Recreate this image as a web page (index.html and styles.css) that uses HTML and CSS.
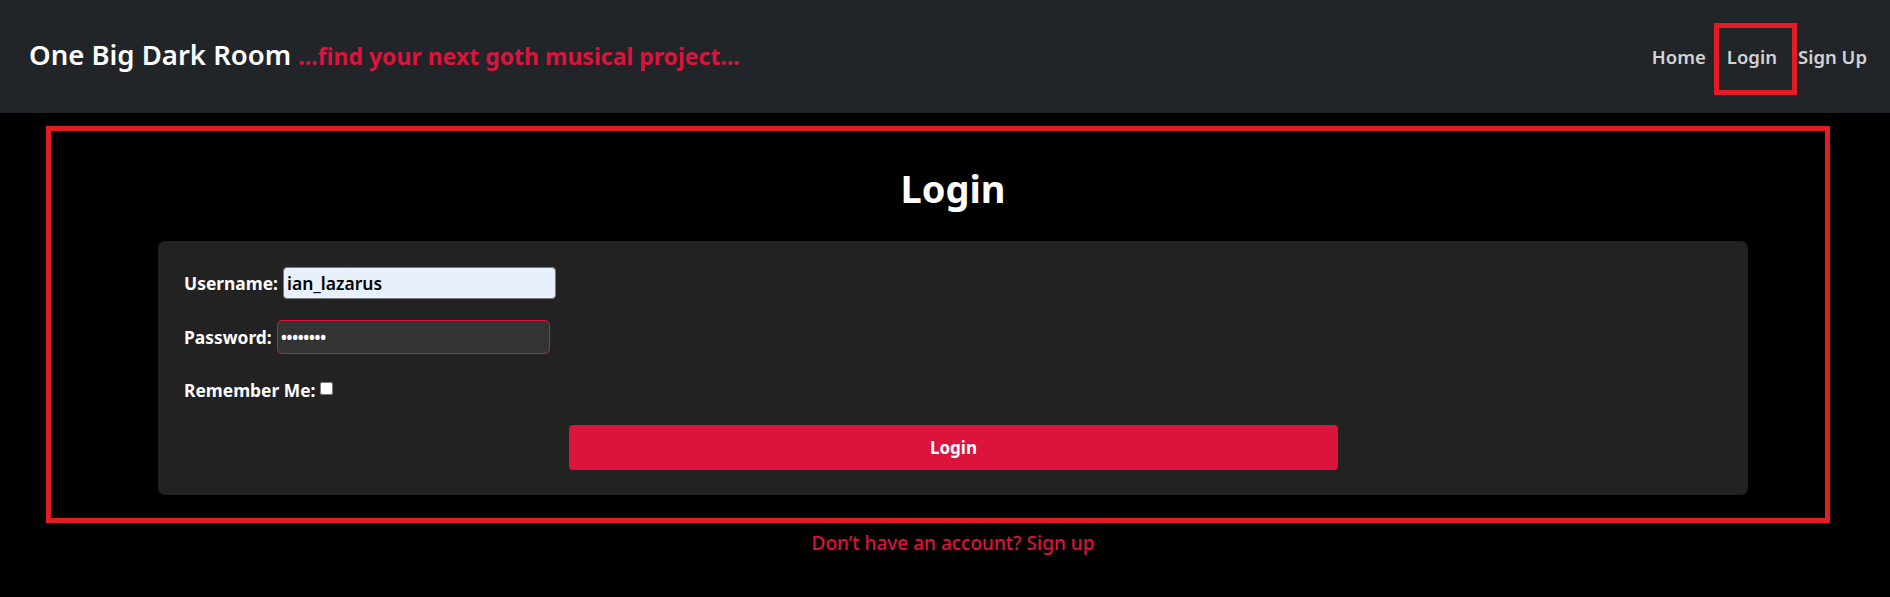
FILE: index.html
```html
<!DOCTYPE html>
<html lang="en">
<head>
<meta charset="utf-8">
<title>Login - One Big Dark Room</title>
<link rel="stylesheet" href="styles.css">
</head>
<body>
<header class="navbar">
  <a class="brand" href="#">One Big Dark Room <span class="tagline">...find your next goth musical project...</span></a>
  <nav>
    <ul class="nav-list">
      <li><a class="nav-link" href="#">Home</a></li>
      <li><a class="nav-link active" href="#">Login</a></li>
      <li><a class="nav-link" href="#">Sign Up</a></li>
    </ul>
  </nav>
</header>
<main class="main">
  <section class="frame">
    <div class="content">
      <h1 class="title">Login</h1>
      <form class="card">
        <div class="field field-user">
          <label class="label" for="username">Username:</label>
          <input class="input input-user" id="username" type="text" value="ian_lazarus">
        </div>
        <div class="field field-pass">
          <label class="label" for="password">Password:</label>
          <input class="input input-pass" id="password" type="password" value="password">
        </div>
        <div class="field field-remember">
          <label class="label" for="remember">Remember Me:</label>
          <input class="check" id="remember" type="checkbox">
        </div>
        <button class="btn" type="button">Login</button>
      </form>
    </div>
  </section>
  <p class="signup"><a href="#">Don’t have an account? Sign up</a></p>
</main>
</body>
</html>
```

FILE: styles.css
```css
* { box-sizing: border-box; }

body {
  margin: 0;
  background: #000;
  font-family: "Noto Sans", "Open Sans", sans-serif;
  color: #fff;
}

a { text-decoration: none; }

.navbar {
  height: 113px;
  background: #212529;
  display: flex;
  align-items: center;
  justify-content: space-between;
  padding: 0 23px 0 29px;
}

.brand {
  color: #fff;
  font-size: 27.5px;
  font-weight: 600;
  line-height: 30px;
  white-space: nowrap;
  margin-top: -2px;
}

.tagline {
  color: #dc143c;
  font-size: 23px;
  font-weight: 700;
}

.nav-list {
  list-style: none;
  margin: 0;
  padding: 0;
  display: flex;
  gap: 21px;
}

.nav-link {
  display: block;
  position: relative;
  color: #d2d3d4;
  font-size: 18.5px;
  font-weight: 600;
  line-height: 20px;
  margin-top: 0;
}

.nav-link.active::after {
  content: "";
  position: absolute;
  left: -13px;
  right: -20px;
  top: -24px;
  bottom: -28px;
  border: 5px solid #e31b23;
}

.main {
  padding-top: 13px;
}

.frame {
  margin: 0 60px 0 46px;
  border: 5px solid #e31b23;
  padding: 34px 77px 23px 107px;
}

.title {
  margin: 0 0 30px;
  text-align: center;
  font-size: 38px;
  font-weight: 700;
  line-height: 46px;
}

.card {
  background: #222;
  border-radius: 7px;
  padding: 26px 25px 25px 26px;
}

.field {
  display: flex;
  align-items: center;
}

.field-user { margin-bottom: 21px; }
.field-pass { margin-bottom: 26px; }
.field-remember { margin-bottom: 25px; height: 20px; }

.label {
  font-size: 17.4px;
  font-weight: 700;
  line-height: 20px;
  color: #fff;
  margin-right: 5px;
}

.input {
  width: 273px;
  font-family: "Noto Sans", "Open Sans", sans-serif;
  font-size: 17.5px;
  font-weight: 600;
  padding: 0 3px;
  outline: none;
}

.input-user {
  height: 32px;
  background: #e8f0fe;
  border: 1px solid #7a7a7a;
  border-radius: 4px;
  color: #000;
}

.input-pass {
  height: 34px;
  background: #333;
  border: 1px solid #dc143c;
  border-radius: 5px;
  color: #fff;
  font-size: 17px;
  letter-spacing: -0.8px;
}

.check {
  width: 13px;
  height: 13px;
  margin: 0 0 4px 0;
}

.btn {
  display: block;
  width: 50%;
  height: 45px;
  margin: 0 auto;
  background: #dc143c;
  border: none;
  border-radius: 4px;
  color: #fff;
  font-family: "Noto Sans", "Open Sans", sans-serif;
  font-size: 17px;
  font-weight: 700;
}

.signup {
  margin: 8px 142px 0 158px;
  text-align: center;
  font-size: 19px;
  font-weight: 500;
  line-height: 24px;
}

.signup a { color: #dc143c; }
```
